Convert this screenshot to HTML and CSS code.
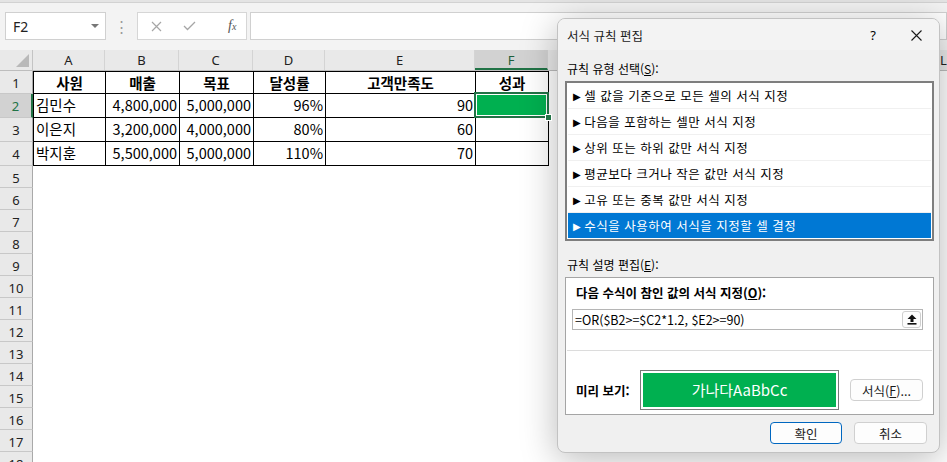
FILE: index.html
```html
<!DOCTYPE html>
<html lang="ko">

<head>
    <meta charset="UTF-8" />
    <title>서식 규칙 편집</title>
    <link rel="stylesheet" href="styles.css">
</head>

<body>
    <div class="excel">
        <div class="topline"></div>

        <!-- 이름 상자 + 수식 입력줄 -->
        <div class="formula-bar">
            <div class="name-box">
                <span>F2</span>
                <span class="caret"></span>
            </div>
            <div class="grip">⋮</div>
            <div class="fx-buttons">
                <svg width="11" height="11" viewBox="0 0 11 11"><path d="M1 1 L10 10 M10 1 L1 10" stroke="#a6a6a6" stroke-width="1.2" fill="none"/></svg>
                <svg width="13" height="10" viewBox="0 0 13 10"><path d="M1 5 L4.5 8.5 L12 1" stroke="#a6a6a6" stroke-width="1.3" fill="none"/></svg>
                <span class="fx"><i>f</i><i class="x">x</i></span>
            </div>
            <div class="formula-input"></div>
        </div>

        <div class="sheet">
            <div class="corner"></div>
            <div class="col-heads">
                <div class="col-head" style="width:72px">A</div>
                <div class="col-head" style="width:74px">B</div>
                <div class="col-head" style="width:74px">C</div>
                <div class="col-head" style="width:72px">D</div>
                <div class="col-head" style="width:150px">E</div>
                <div class="col-head selected" style="width:73px">F</div>
                <div class="col-head" style="width:72px">G</div>
                <div class="col-head" style="width:72px">H</div>
                <div class="col-head" style="width:72px">I</div>
                <div class="col-head" style="width:72px">J</div>
                <div class="col-head" style="width:72px">K</div>
                <div class="col-head" style="width:72px">L</div>
            </div>

            <div class="row-heads">
                <div class="row-head first">1</div>
                <div class="row-head tall selected">2</div>
                <div class="row-head tall">3</div>
                <div class="row-head tall">4</div>
                <div class="row-head">5</div>
                <div class="row-head">6</div>
                <div class="row-head">7</div>
                <div class="row-head">8</div>
                <div class="row-head">9</div>
                <div class="row-head">10</div>
                <div class="row-head">11</div>
                <div class="row-head">12</div>
                <div class="row-head">13</div>
                <div class="row-head">14</div>
                <div class="row-head">15</div>
                <div class="row-head">16</div>
                <div class="row-head">17</div>
                <div class="row-head">18</div>
            </div>

            <div class="cells">
                <div class="data">
                    <div class="cell head">사원</div>
                    <div class="cell head">매출</div>
                    <div class="cell head">목표</div>
                    <div class="cell head">달성률</div>
                    <div class="cell head">고객만족도</div>
                    <div class="cell head">성과</div>

                    <div class="cell">김민수</div>
                    <div class="cell num">4,800,000</div>
                    <div class="cell num">5,000,000</div>
                    <div class="cell num">96%</div>
                    <div class="cell num">90</div>
                    <div class="cell active"><span class="handle"></span></div>

                    <div class="cell">이은지</div>
                    <div class="cell num">3,200,000</div>
                    <div class="cell num">4,000,000</div>
                    <div class="cell num">80%</div>
                    <div class="cell num">60</div>
                    <div class="cell"></div>

                    <div class="cell">박지훈</div>
                    <div class="cell num">5,500,000</div>
                    <div class="cell num">5,000,000</div>
                    <div class="cell num">110%</div>
                    <div class="cell num">70</div>
                    <div class="cell"></div>
                </div>
            </div>
        </div>
    </div>

    <!-- 서식 규칙 편집 대화상자 -->
    <div class="dialog">
        <div class="title-bar">
            <span class="title">서식 규칙 편집</span>
            <span class="help">?</span>
            <svg class="close" width="11" height="11" viewBox="0 0 11 11"><path d="M0.5 0.5 L10.5 10.5 M10.5 0.5 L0.5 10.5" stroke="#1a1a1a" stroke-width="1.1" fill="none"/></svg>
        </div>

        <div class="dialog-body">
            <div class="label">규칙 유형 선택(<u>S</u>):</div>
            <div class="rule-list">
                <div class="rule"><span class="arrow">▶</span>셀 값을 기준으로 모든 셀의 서식 지정</div>
                <div class="rule"><span class="arrow">▶</span>다음을 포함하는 셀만 서식 지정</div>
                <div class="rule"><span class="arrow">▶</span>상위 또는 하위 값만 서식 지정</div>
                <div class="rule"><span class="arrow">▶</span>평균보다 크거나 작은 값만 서식 지정</div>
                <div class="rule"><span class="arrow">▶</span>고유 또는 중복 값만 서식 지정</div>
                <div class="rule selected"><span class="arrow">▶</span>수식을 사용하여 서식을 지정할 셀 결정</div>
            </div>

            <div class="label second">규칙 설명 편집(<u>E</u>):</div>
            <div class="desc-box">
                <div class="desc-title">다음 수식이 참인 값의 서식 지정(<u>O</u>):</div>
                <div class="formula-field">
                    <span>=OR($B2&gt;=$C2*1.2, $E2&gt;=90)</span>
                    <span class="collapse-btn">
                        <svg width="10" height="11" viewBox="0 0 10 11"><path d="M5 0.5 L9.5 5 H6.5 V8 H3.5 V5 H0.5 Z" fill="#111"/><rect x="0.5" y="9" width="9" height="1.6" fill="#111"/></svg>
                    </span>
                </div>
                <div class="desc-sep"></div>
                <div class="preview-row">
                    <span class="preview-label">미리 보기:</span>
                    <div class="preview"><div class="preview-fill">가나다AaBbCc</div></div>
                    <button type="button" class="btn format-btn">서식(<u>F</u>)...</button>
                </div>
            </div>

            <div class="actions">
                <button type="button" class="btn primary">확인</button>
                <button type="button" class="btn">취소</button>
            </div>
        </div>
    </div>
</body>

</html>
```

FILE: styles.css
```css
* {
    box-sizing: border-box;
}

body {
    margin: 0;
    width: 947px;
    height: 462px;
    overflow: hidden;
    position: relative;
    background: #fff;
    font-family: "Noto Sans CJK KR", "Noto Sans", sans-serif;
    color: #000;
}

/* ---------- 엑셀 배경 ---------- */

.topline {
    height: 3px;
    background: #e4e4e4;
    border-bottom: 1px solid #d2d2d2;
}

.formula-bar {
    height: 47px;
    background: #f3f3f3;
    display: flex;
    align-items: flex-start;
    padding-top: 9px;
    padding-left: 5px;
}

.name-box {
    width: 101px;
    height: 28px;
    background: #fff;
    border: 1px solid #d0d0d0;
    display: flex;
    align-items: center;
    justify-content: space-between;
    padding: 0 6px 0 7px;
    font-family: "Noto Sans", sans-serif;
    font-size: 14px;
    color: #222;
}

.caret {
    width: 0;
    height: 0;
    border-left: 4px solid transparent;
    border-right: 4px solid transparent;
    border-top: 4px solid #777;
}

.grip {
    width: 31px;
    text-align: center;
    color: #9a9a9a;
    font-size: 15px;
    line-height: 28px;
}

.fx-buttons {
    width: 110px;
    height: 28px;
    background: #fff;
    border: 1px solid #d6d6d6;
    display: flex;
    align-items: center;
    padding-left: 13px;
    gap: 21px;
}

.fx {
    font-family: "Liberation Serif", serif;
    color: #555;
    font-size: 14px;
    margin-left: 11px;
}

.fx .x {
    font-size: 10px;
}

.formula-input {
    margin-left: 3px;
    flex: 1;
    height: 28px;
    background: #fff;
    border: 1px solid #d0d0d0;
}

.sheet {
    display: grid;
    grid-template-columns: 33px 1fr;
    grid-template-rows: 21px 1fr;
}

.corner {
    background: #e9e9e9;
    border-right: 1px solid #c4c4c4;
    border-bottom: 1px solid #bdbdbd;
    position: relative;
}

.corner::after {
    content: "";
    position: absolute;
    right: 3px;
    bottom: 3px;
    border-left: 13px solid transparent;
    border-bottom: 13px solid #b9b9b9;
}

.col-heads {
    display: flex;
    background: #e9e9e9;
    border-bottom: 1px solid #bdbdbd;
}

.col-head {
    flex: none;
    text-align: center;
    font-family: "Noto Sans", sans-serif;
    font-size: 13px;
    line-height: 20px;
    color: #222;
    border-right: 1px solid #d4d4d4;
}

.col-head.selected {
    background: #d2d2d2;
    color: #1e5e3b;
    border-bottom: 2px solid #217346;
}

.row-heads {
    display: flex;
    flex-direction: column;
    background: #e9e9e9;
}

.row-head {
    height: 22px;
    flex: none;
    text-align: center;
    font-family: "Noto Sans", sans-serif;
    font-size: 13px;
    line-height: 22px;
    color: #222;
    border-right: 1px solid #a9a9a9;
    border-bottom: 1px solid #c8c8c8;
    padding-top: 1px;
}

.row-head.first {
    height: 23px;
}

.row-head.tall {
    height: 24px;
}

.row-head.selected {
    background: #d2d2d2;
    color: #217346;
    border-right: 2px solid #217346;
}

.data {
    display: grid;
    grid-template-columns: 72px 74px 74px 72px 150px 73px;
    grid-template-rows: 22px 24px 24px 24px;
    width: max-content;
    border-left: 1px solid #000;
    border-top: 1px solid #000;
}

.cell {
    border-right: 1px solid #000;
    border-bottom: 1px solid #000;
    font-size: 14.5px;
    line-height: 22px;
    padding: 0 2px;
    white-space: nowrap;
}

.cell.head {
    text-align: center;
    font-weight: 700;
    line-height: 21px;
}

.cell.num {
    text-align: right;
}

.cell.active {
    position: relative;
}

.cell.active::before {
    content: "";
    position: absolute;
    left: -2px;
    top: -2px;
    right: -1px;
    bottom: -1px;
    border: 2px solid #217346;
    background: #00b050;
    box-shadow: inset 0 0 0 1px #fff;
}

.handle {
    position: absolute;
    right: -4px;
    bottom: -4px;
    width: 7px;
    height: 7px;
    background: #217346;
    border: 1px solid #fff;
    z-index: 1;
}

/* ---------- 대화상자 ---------- */

.dialog {
    position: absolute;
    left: 557px;
    top: 18px;
    width: 383px;
    height: 435px;
    background: #f0f0f0;
    border: 1px solid #c2c2c2;
    border-radius: 8px;
    box-shadow: 0 6px 36px rgba(0, 0, 0, 0.28);
    font-size: 12px;
    overflow: hidden;
}

.title-bar {
    height: 31px;
    background: #f3f3f3;
    display: flex;
    align-items: center;
    padding-left: 9px;
    padding-top: 1px;
}

.title {
    flex: 1;
    font-size: 12.5px;
    color: #1a1a1a;
}

.help {
    font-family: "Noto Sans", sans-serif;
    font-size: 13px;
    margin-right: 35px;
}

.close {
    margin-right: 17px;
}

.dialog-body {
    padding: 11px 5px 0 7px;
}

.label {
    line-height: 16px;
    height: 16px;
    font-size: 12px;
    margin-left: 2px;
}

.label.second {
    margin-top: 16px;
}

.rule-list {
    margin-top: 4px;
    border: 2px solid #7e7e7e;
    background: #fff;
    padding: 0 1px;
}

.rule {
    height: 26px;
    line-height: 25px;
    padding-left: 5px;
    border-bottom: 1px solid #f0f0f0;
    font-size: 12.5px;
    letter-spacing: 0.5px;
    white-space: nowrap;
}

.arrow {
    font-family: "DejaVu Sans", sans-serif;
    font-size: 10px;
    margin-right: 3px;
    vertical-align: 1px;
}

.rule.selected {
    background: #0078d4;
    color: #fff;
    border-bottom: none;
    height: 25px;
    margin-bottom: 1px;
}

.desc-box {
    margin-top: 4px;
    height: 138px;
    background: #fff;
    border: 1px solid #a5a5a5;
    padding: 7px 1px 0 1px;
}

.desc-title {
    font-weight: 700;
    line-height: 16px;
    margin-left: 9px;
    font-size: 12.5px;
}

.formula-field {
    margin: 8px 0 0 5px;
    width: 351px;
    height: 21px;
    border: 1px solid #b5b5b5;
    display: flex;
    align-items: center;
    justify-content: space-between;
    padding: 0 1px 0 2px;
    font-size: 12.5px;
}

.collapse-btn {
    width: 19px;
    height: 17px;
    border: 1px solid #cfcfcf;
    border-radius: 3px;
    background: #fdfdfd;
    display: flex;
    align-items: center;
    justify-content: center;
}

.desc-sep {
    margin-top: 20px;
    height: 1px;
    background: #dcdcdc;
}

.preview-row {
    display: flex;
    align-items: center;
    padding: 19px 0 0 9px;
}

.preview-label {
    font-weight: 700;
    width: 64px;
    font-size: 12.5px;
}

.preview {
    width: 199px;
    height: 40px;
    border: 1px solid #7a7a7a;
    padding: 2px;
    background: #fff;
}

.preview-fill {
    height: 100%;
    background: #00b050;
    color: #fff;
    text-align: center;
    font-size: 15px;
    line-height: 34px;
}

.btn {
    font-family: "Noto Sans CJK KR", "Noto Sans", sans-serif;
    font-size: 12.5px;
    height: 22px;
    padding: 0;
    background: #fdfdfd;
    border: 1px solid #d0d0d0;
    border-radius: 4px;
    color: #1a1a1a;
}

.format-btn {
    width: 73px;
    margin-left: 11px;
}

.actions {
    display: flex;
    justify-content: flex-end;
    gap: 12px;
    margin-top: 7px;
    padding-right: 7px;
}

.actions .btn {
    width: 73px;
}

.btn.primary {
    border-color: #0067c0;
    width: 72px;
}
```
